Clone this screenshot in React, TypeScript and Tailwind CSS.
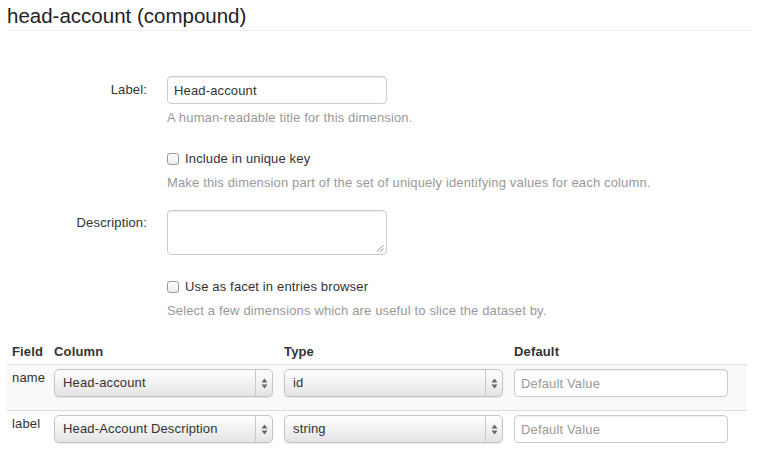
import type { ReactNode } from "react";

const FONT = { fontFamily: '"Liberation Sans", Arial, Helvetica, sans-serif' };

function SelectBox({ value }: { value: string }) {
  return (
    <div className="relative mb-[9px] flex h-[28px] w-[219px] items-center rounded-[5px] border border-[#c4c4c4] bg-gradient-to-b from-white to-[#e4e4e4] shadow-[0_1px_1px_rgba(0,0,0,0.08)]">
      <span className="flex-1 pl-[8px] text-[13px] text-[#333]">{value}</span>
      <div className="flex h-full w-[17px] flex-col items-center justify-center gap-[2px] border-l border-[#c8c8c8]">
        <svg width="7" height="11" viewBox="0 0 7 11">
          <path d="M3.5 0.5 L6.5 4.5 L0.5 4.5 Z" fill="#666" />
          <path d="M3.5 10.5 L6.5 6.5 L0.5 6.5 Z" fill="#666" />
        </svg>
      </div>
    </div>
  );
}

function TextInput({ placeholder }: { placeholder: string }) {
  return (
    <input
      placeholder={placeholder}
      className="mb-[9px] h-[28px] w-[214px] rounded-[4px] border border-[#ccc] bg-white px-[6px] text-[13px] tracking-[0.15px] text-[#333] shadow-[inset_0_1px_1px_rgba(0,0,0,0.075)] outline-none placeholder:text-[#999]"
      style={FONT}
    />
  );
}

function Checkbox({ children }: { children: ReactNode }) {
  return (
    <label className="flex h-[18px] items-center gap-[6px] text-[13px] text-[#333]">
      <span className="inline-block h-[12px] w-[12px] rounded-[3px] border border-[#9a9a9a] bg-gradient-to-b from-white to-[#ececec]" />
      {children}
    </label>
  );
}

function Help({ children, className = "" }: { children: ReactNode; className?: string }) {
  return <p className={`text-[13px] leading-[18px] text-[#999] ${className}`}>{children}</p>;
}

const rows = [
  { field: "name", column: "Head-account", type: "id", striped: true },
  { field: "label", column: "Head-Account Description", type: "string", striped: false },
];

export default function App() {
  return (
    <div
      className="min-h-[468px] bg-white px-[7px] text-[13px] leading-[18px] tracking-[0.15px] text-[#333]"
      style={FONT}
    >
      <h3 className="border-b border-[#eee] pt-[1px] text-[20.5px] leading-[29px] tracking-normal text-[#222]">
        head-account (compound)
      </h3>

      <div className="mt-[45px] grid grid-cols-[140px_1fr] gap-x-[20px]">
        <div className="pt-[5px] text-right">Label:</div>
        <div>
          <input
            defaultValue="Head-account"
            className="h-[28px] w-[220px] rounded-[4px] border border-[#ccc] px-[6px] text-[13px] tracking-[0.15px] text-[#333] shadow-[inset_0_1px_1px_rgba(0,0,0,0.075)] outline-none"
            style={FONT}
          />
          <Help className="mt-[5px]">A human-readable title for this dimension.</Help>
        </div>

        <div />
        <div className="mt-[23px]">
          <Checkbox>Include in unique key</Checkbox>
          <Help className="mt-[6px]">
            Make this dimension part of the set of uniquely identifying values for each column.
          </Help>
        </div>

        <div className="mt-[18px] pt-[4px] text-right">Description:</div>
        <div className="mt-[18px]">
          <div className="relative h-[45px] w-[220px] rounded-[4px] border border-[#ccc] shadow-[inset_0_1px_1px_rgba(0,0,0,0.075)]">
            <svg className="absolute bottom-[2px] right-[2px]" width="8" height="8" viewBox="0 0 8 8">
              <path d="M7.5 1 L1 7.5 M7.5 4.5 L4.5 7.5" stroke="#888" strokeWidth="1" />
            </svg>
          </div>
        </div>

        <div />
        <div className="mt-[23px]">
          <Checkbox>Use as facet in entries browser</Checkbox>
          <Help className="mt-[6px]">Select a few dimensions which are useful to slice the dataset by.</Help>
        </div>
      </div>

      <table className="mt-[19px] w-[740px] table-fixed border-collapse text-left">
        <colgroup>
          <col className="w-[42px]" />
          <col className="w-[230px]" />
          <col className="w-[230px]" />
          <col className="w-[238px]" />
        </colgroup>
        <thead>
          <tr className="border-b border-[#ddd]">
            <th className="px-[5px] pb-[3px] pt-[4px] font-bold">Field</th>
            <th className="px-[5px] pb-[3px] pt-[4px] font-bold">Column</th>
            <th className="px-[5px] pb-[3px] pt-[4px] font-bold">Type</th>
            <th className="px-[5px] pb-[3px] pt-[4px] font-bold">Default</th>
          </tr>
        </thead>
        <tbody>
          {rows.map((r) => (
            <tr key={r.field} className={r.striped ? "border-b border-[#ddd] bg-[#f9f9f9]" : ""}>
              <td className="px-[5px] pb-[4px] pt-[4px] align-top">{r.field}</td>
              <td className="px-[5px] pb-[4px] pt-[4px] align-top">
                <SelectBox value={r.column} />
              </td>
              <td className="px-[5px] pb-[4px] pt-[4px] align-top">
                <SelectBox value={r.type} />
              </td>
              <td className="px-[5px] pb-[4px] pt-[4px] align-top">
                <TextInput placeholder="Default Value" />
              </td>
            </tr>
          ))}
        </tbody>
      </table>
    </div>
  );
}
